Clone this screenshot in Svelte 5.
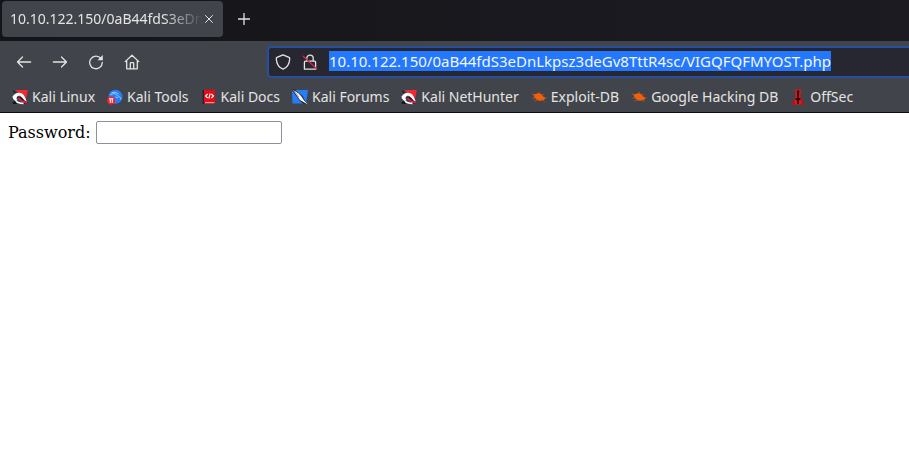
<script>
  import { onMount } from 'svelte';

  let address = $state('10.10.122.150/0aB44fdS3eDnLkpsz3deGv8TttR4sc/VIGQFQFMYOST.php');
  let password = $state('');
  let addressField;

  const bookmarks = [
    { name: 'Kali Linux', icon: 'dragon' },
    { name: 'Kali Tools', icon: 'tools' },
    { name: 'Kali Docs', icon: 'docs' },
    { name: 'Kali Forums', icon: 'forums' },
    { name: 'Kali NetHunter', icon: 'dragon' },
    { name: 'Exploit-DB', icon: 'bug' },
    { name: 'Google Hacking DB', icon: 'bug' },
    { name: 'OffSec', icon: 'offsec' }
  ];

  onMount(() => {
    addressField.focus({ preventScroll: true });
    addressField.select();
    addressField.scrollLeft = 0;
  });
</script>

{#snippet favicon(kind)}
  <svg class="favicon" viewBox="0 0 16 16" aria-hidden="true">
    {#if kind === 'dragon'}
      <path d="M3.5 1H15.8L13.5 12.5Z" fill="#f5272f" />
      <path d="M.5 1 4 3.2 2.5 4Z M.5 13.5 3 11.5 5 15H1Z" fill="#15161a" />
      <path d="M5 8.5 12 15H15L13 12 9 8Z" fill="#15161a" />
      <path d="M.5 7.5C3 3.5 7 2.8 10 4.5C12.8 6.2 13 9 14.8 12.5C12 12 10 7 7.2 6.8C4.6 6.8 3.8 9.3 5.5 11.2L3.5 12C1.3 10.8 .6 9 .5 7.5Z" fill="#fff" />
      <path d="M6.5 8.7C8.5 11.5 11 13 14.8 13.8" fill="none" stroke="#d9234e" stroke-width="1.9" />
      <path d="M4 12C6 14.2 9 14.4 11.5 14.4" fill="none" stroke="#fff" stroke-width="1.7" />
    {:else if kind === 'tools'}
      <circle cx="8.5" cy="7.8" r="7" fill="#267df5" />
      <path d="M3 6C6 4 9 4.6 10.5 6.8C12.4 7.2 13.6 8.6 14 10.5M4.5 3.8C7 2.8 9.5 3.5 11.5 5M8.5 8 11 8.8" fill="none" stroke="#a9d4ff" stroke-width=".9" />
      <circle cx="4.2" cy="11.5" r="4" fill="#f5222d" />
      <path d="M2.2 9.8H6.4M3.3 10V13.7M5.3 10V13.7" fill="none" stroke="#fff" stroke-width="1.1" />
    {:else if kind === 'docs'}
      <path d="M1.5 1H3.5V15H1.5Z" fill="#27213e" />
      <path d="M3 .8H14V13.2H3Z" fill="#e20b16" />
      <path d="M3 13H14V15.2H3Z" fill="#a8111a" />
      <path d="M4 13.3H13.5V14.2H4Z" fill="#e6d7d9" />
      <path d="M6.7 5 4.5 7 6.7 9M10.3 5 12.5 7 10.3 9M9.2 4.5 7.8 9.5" fill="none" stroke="#fff" stroke-width="1.1" />
    {:else if kind === 'forums'}
      <path d="M0 1H16L14 14.5H.5Z" fill="#267df5" />
      <path d="M0 1 5 8 8 12 11 14.5 15 15.5 10.5 7 5 2.5 2 0Z" fill="#20242d" />
      <path d="M1 1 4.5 3 7 4.7 9.8 8 12 11.5 15.8 15.5 11 12.8 8 11 5.5 7.5Z" fill="#fff" />
      <path d="M2 2 7 8" stroke="#6b7078" stroke-width=".7" />
    {:else if kind === 'bug'}
      <path d="M3 5.2 5.5 4.8 7.5 4 9.5 4.8 11 5.8 12 7.4 13.8 8.2 14.2 9.6 13 10.8 11 11.6 8.5 11.8 6.2 11 4.6 9.6 3.4 8.2 2.6 6.6Z" fill="#ee600e" />
      <path d="M4 6 .8 4.8M5 9 1.5 9.2M6.5 11 3.5 12M8.8 4.8 8.2 2.8M11 6.5 13.2 5M13.5 9 15.6 9M11.8 11 13.5 12.6" fill="none" stroke="#c2530f" stroke-width=".9" />
    {:else}
      <path d="M5.2 .5H11L10.5 8.5 14.5 15.5H1.5L5.7 8.5Z" fill="#e3131b" />
      <path d="M7 1.5H9.3L8.8 9.2H10.5V11H8.8V15H7.2V11H5.5V9.2H7.4Z" fill="#20090d" />
      <path d="M1.5 15.5 4.5 10.5V15.5ZM14.5 15.5 11.5 10.5V15.5Z" fill="#b01118" />
    {/if}
  </svg>
{/snippet}

<div class="browser">
  <header>
    <div class="tabs">
      <div class="tab">
        <span class="title">10.10.122.150/0aB44fdS3eDn</span>
        <button class="close" aria-label="Close tab">
          <svg viewBox="0 0 10 10"><path d="M1.5 1.5 8.5 8.5M8.5 1.5 1.5 8.5" /></svg>
        </button>
      </div>
      <button class="add" aria-label="New tab">
        <svg viewBox="0 0 12 12"><path d="M6 .5V11.5M.5 6H11.5" /></svg>
      </button>
    </div>

    <nav class="toolbar" aria-label="Navigation">
      <div class="controls">
        <button aria-label="Back">
          <svg viewBox="0 0 16 16"><path d="M14.6 8H1.5M6.5 3 1.5 8 6.5 13" /></svg>
        </button>
        <button aria-label="Forward">
          <svg viewBox="0 0 16 16"><path d="M1.4 8H14.5M9.5 3 14.5 8 9.5 13" /></svg>
        </button>
        <button aria-label="Reload">
          <svg viewBox="0 0 16 16">
            <path d="M13 4.6A6.3 6.3 0 1 0 14.3 8.5" />
            <path class="solid" d="M14.8 1V6.3H9.5Z" />
          </svg>
        </button>
        <button aria-label="Home">
          <svg viewBox="0 0 16 16">
            <path d="M1.2 7.6 8 1.2 14.8 7.6M2.7 6.8V14.8H13.3V6.8M6.3 14.5V9.5Q6.3 8.7 7 8.7H9Q9.7 8.7 9.7 9.5V14.5" />
          </svg>
        </button>
      </div>
      <div class="address">
        <svg viewBox="0 0 16 16" aria-hidden="true">
          <path d="M8 .8 14 3.4Q14.8 3.8 14.7 5C14.4 9.5 12.5 13.5 8 15.2C3.5 13.5 1.6 9.5 1.3 5Q1.2 3.8 2 3.4Z" />
        </svg>
        <svg viewBox="0 0 16 16" aria-hidden="true">
          <path d="M4.8 7V4.3A3.2 3.2 0 0 1 11.2 4.3V7M3.5 7.2H12.5Q13.6 7.2 13.6 8.3V15.2H2.4V8.3Q2.4 7.2 3.5 7.2Z" />
          <path class="slash" d="M1.2 2.2 14.8 15" />
        </svg>
        <input bind:this={addressField} bind:value={address} aria-label="Address" spellcheck="false" />
      </div>
    </nav>

    <nav class="bookmarks" aria-label="Bookmarks">
      {#each bookmarks as bookmark}
        <a href="#{bookmark.icon}">{@render favicon(bookmark.icon)}{bookmark.name}</a>
      {/each}
    </nav>
  </header>

  <main>
    <form>
      <label for="password">Password:</label>
      <input id="password" type="password" bind:value={password} />
    </form>
  </main>
</div>

<style>
  :global(body) {
    margin: 0;
    background: #fff;
  }

  .browser {
    overflow: hidden;
  }

  header {
    border-bottom: 1px solid #0c0c0d;
    background: #42444c;
    color: #e4e4e0;
    font: 15px/20px "Noto Sans", sans-serif;
  }

  button {
    display: flex;
    align-items: center;
    justify-content: center;
    padding: 0;
    border: 0;
    background: none;
    color: inherit;
  }

  svg {
    flex: none;
    width: 16px;
    height: 16px;
    fill: none;
    stroke: currentColor;
    stroke-width: 1.3;
    stroke-linecap: round;
    stroke-linejoin: round;
  }

  .tabs {
    display: flex;
    gap: 6px;
    height: 37px;
    padding: 1px 2px 3px;
    background: linear-gradient(90deg, #141519, #1c1b22);
  }

  .tab {
    display: flex;
    align-items: center;
    box-sizing: border-box;
    width: 221px;
    height: 36px;
    padding: 0 8px;
    border-radius: 4px;
    background: #42444c;
  }

  .title {
    flex: 1;
    white-space: nowrap;
    font-size: 14px;
    mask-image: linear-gradient(to left, transparent, #000 40px);
  }

  .close {
    width: 16px;
    height: 20px;
  }

  .close svg {
    width: 10px;
    height: 10px;
    stroke-width: 1;
  }

  .add {
    width: 30px;
    height: 36px;
  }

  .add svg {
    width: 12px;
    height: 12px;
  }

  .toolbar {
    display: flex;
    align-items: center;
    height: 41px;
  }

  .controls {
    display: flex;
    width: 267px;
    padding-left: 6px;
    box-sizing: border-box;
  }

  .controls button {
    width: 36px;
    height: 32px;
  }

  .solid {
    fill: currentColor;
    stroke: none;
  }

  .address {
    display: flex;
    flex: 1;
    align-items: center;
    gap: 11px;
    box-sizing: border-box;
    min-width: 0;
    height: 32px;
    padding-left: 6px;
    border: 2px solid #264f9e;
    border-right: 0;
    border-radius: 4px 0 0 4px;
    background: #262731;
  }

  .address input {
    flex: 1;
    min-width: 0;
    height: 20px;
    padding: 0 0 2px;
    border: 0;
    outline: 0;
    background: none;
    color: #fff;
    font: inherit;
  }

  .address input::selection {
    background: #2478ff;
    color: #f4f6fa;
  }

  .slash {
    stroke: #d6224c;
  }

  .bookmarks {
    display: flex;
    gap: 12px;
    height: 30px;
    padding-left: 12px;
    font-size: 14px;
  }

  .bookmarks a {
    display: flex;
    align-items: center;
    gap: 4px;
    color: inherit;
    text-decoration: none;
    white-space: nowrap;
  }

  .favicon {
    stroke: none;
    stroke-linecap: butt;
  }

  main {
    padding: 8px;
    color: #000;
    font: 16px/23px "DejaVu Serif", serif;
  }

  form {
    display: flex;
    align-items: center;
    gap: 5px;
  }

  form input {
    box-sizing: border-box;
    width: 186px;
    height: 23px;
    padding: 1px 2px;
    border: 1px solid #8f8f9d;
    border-radius: 2px;
    outline: 0;
    background: #fff;
  }
</style>
